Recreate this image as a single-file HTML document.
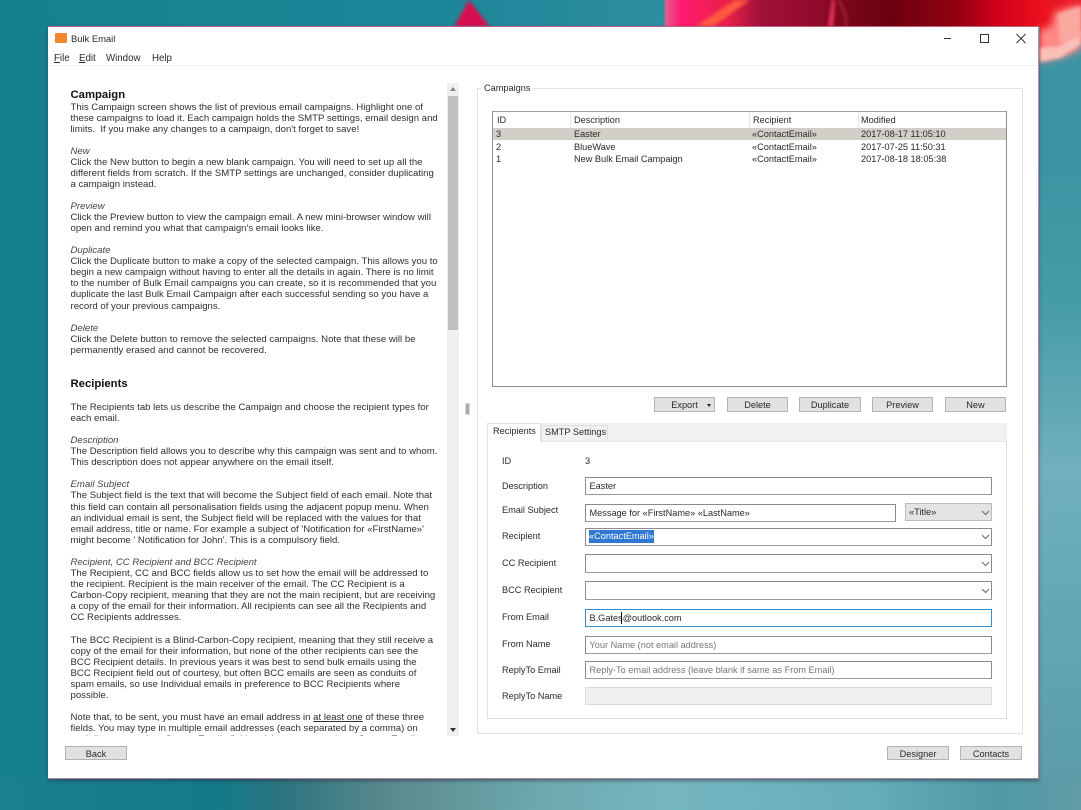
<!DOCTYPE html>
<html lang="en"><head><meta charset="utf-8"><title>Bulk Email</title>
<style>
html,body{margin:0;padding:0;width:1081px;height:810px;overflow:hidden;background:#1a8296}
#bg{position:absolute;left:0;top:0}
#win{position:absolute;left:48px;top:26px;width:990px;height:751px;background:#fff;border-top:1px solid #c06080;border-right:1px solid #b88aa0;border-bottom:1px solid #a88aa0;box-shadow:0 2px 3px rgba(50,40,60,.5);overflow:hidden}
.a{position:absolute;white-space:nowrap}
#p{position:absolute;left:0;top:0;width:1081px;height:810px;overflow:hidden}
.u{position:absolute;white-space:nowrap;font:9.2px/12px "Liberation Sans",sans-serif;color:#2a2a2a;margin-top:2px}
.m{font-size:9.7px;margin-top:0}
#help{position:absolute;left:60px;top:83px;width:387px;height:653px;overflow:hidden}
#help div{position:absolute;left:10.5px;margin-top:1px;white-space:nowrap;font:9.6px/12px "Liberation Sans",sans-serif;color:#303030}
#help i{color:#444}
#help .h{font-weight:bold;font-size:11.3px;color:#111}
.b{position:absolute;box-sizing:border-box;background:#e1e1e1;border:1px solid #b4b4b4;text-align:center;font:9.2px/14px "Liberation Sans",sans-serif;color:#2a2a2a}
.i{position:absolute;box-sizing:border-box;left:585px;width:407px;background:#fff;border:1px solid #8b8b8b;border-bottom-color:#999;font:9.2px/16px "Liberation Sans",sans-serif;color:#2a2a2a;padding-left:3.500px;white-space:nowrap}
.ph{color:#777}
.c{position:absolute;width:9px;height:6px}
</style></head><body>
<svg id="bg" width="1081" height="810" viewBox="0 0 1081 810">
<defs>
<filter id="f1" x="-50%" y="-50%" width="200%" height="200%"><feGaussianBlur stdDeviation="1.500"/></filter>
<filter id="f3" x="-50%" y="-50%" width="200%" height="200%"><feGaussianBlur stdDeviation="4"/></filter>
<linearGradient id="t" x1="0" x2="1" y1="0" y2="0"><stop offset="0" stop-color="#16808f"/><stop offset=".42" stop-color="#1d8699"/><stop offset=".6" stop-color="#2d8da0"/><stop offset="1" stop-color="#3c94a2"/></linearGradient>
<linearGradient id="bot" x1="0" x2="1081" y1="0" y2="0" gradientUnits="userSpaceOnUse"><stop offset="0" stop-color="#1a8090"/><stop offset=".2" stop-color="#137a8a"/><stop offset=".26" stop-color="#2c747e"/><stop offset=".36" stop-color="#5a8a8e"/><stop offset=".5" stop-color="#6da9ae"/><stop offset=".62" stop-color="#75b6c0"/><stop offset=".8" stop-color="#66aeba"/><stop offset=".92" stop-color="#4f9aa6"/><stop offset="1" stop-color="#5f9ca6"/></linearGradient>
<linearGradient id="rgt" x1="0" x2="0" y1="0" y2="810" gradientUnits="userSpaceOnUse"><stop offset="0" stop-color="#3c94a2"/><stop offset=".2" stop-color="#3c94a2"/><stop offset=".38" stop-color="#469ca8"/><stop offset=".58" stop-color="#70b0bc"/><stop offset=".75" stop-color="#62a8b4"/><stop offset="1" stop-color="#5a9aa6"/></linearGradient>
<linearGradient id="red" x1="660" x2="1081" y1="0" y2="0" gradientUnits="userSpaceOnUse"><stop offset="0" stop-color="#2d8da0" stop-opacity="0"/><stop offset=".015" stop-color="#e85a90"/><stop offset=".05" stop-color="#ff1a70"/><stop offset=".16" stop-color="#e8204a"/><stop offset=".24" stop-color="#a0103a"/><stop offset=".38" stop-color="#900a2a"/><stop offset=".44" stop-color="#780818"/><stop offset=".55" stop-color="#6c0010"/><stop offset=".7" stop-color="#900010"/><stop offset=".8" stop-color="#d00018"/><stop offset=".9" stop-color="#ea101e"/><stop offset="1" stop-color="#e8202a"/></linearGradient>
</defs>
<rect width="1081" height="810" fill="url(#t)"/>
<rect x="1039" y="0" width="42" height="810" fill="url(#rgt)"/>
<rect x="0" y="778" width="1081" height="32" fill="url(#bot)"/>
<polygon points="454,27 469,0 490,27" fill="#d8104f" filter="url(#f1)"/>
<polygon points="664,0 1081,0 1081,42 1040,58 1040,27 664,27" fill="url(#red)"/>
<polygon points="695,27 735,0 750,0 712,27" fill="#ff5a40" filter="url(#f1)"/>
<polygon points="828,27 832,0 835,0 833,27" fill="#f03060" filter="url(#f1)"/>
<path d="M838 0Q848 14 846 27" fill="none" stroke="#c83040" stroke-width="1.500" filter="url(#f1)"/>
<polygon points="1039,30 1052,26 1054,12 1081,4 1081,50 1066,56 1039,62" fill="#ff8a88" filter="url(#f3)"/>
<polygon points="1040,48 1060,46 1081,30 1081,44 1060,58 1040,62" fill="#f9c0b8" filter="url(#f1)"/>
<polygon points="1058,14 1081,6 1081,36 1060,44" fill="#f9a9a0" filter="url(#f1)"/>
</svg>
<div id="win"></div>
<div id="p">
<div class="a" style="left:55px;top:33px;width:12px;height:10px;background:#f0862e;border-radius:1px"></div>
<div class="u" style="left:71px;top:30.500px;font-size:9.400px">Bulk Email</div>
<div class="u m" style="left:54px;top:53px"><u>F</u>ile</div>
<div class="u m" style="left:79px;top:53px"><u>E</u>dit</div>
<div class="u m" style="left:106px;top:53px">Window</div>
<div class="u m" style="left:152px;top:53px">Help</div>
<div class="a" style="left:48px;top:65px;width:990px;height:1px;background:#f0f0f0"></div>
<svg class="a" style="left:940px;top:30px" width="90" height="16" viewBox="0 0 90 16" fill="none" stroke="#333" stroke-width="1"><path d="M4 8.500H11"/><rect x="40.500" y="4.500" width="8" height="8"/><path d="M76.500 4L85.500 13M85.500 4L76.500 13"/></svg>

<div id="help">
<div class="h" style="top:5.500px;margin-top:0">Campaign</div>
<div style="top:18px">This Campaign screen shows the list of previous email campaigns. Highlight one of</div>
<div style="top:29px">these campaigns to load it. Each campaign holds the SMTP settings, email design and</div>
<div style="top:40px">limits.&nbsp; If you make any changes to a campaign, don't forget to save!</div>
<div style="top:62px"><i>New</i></div>
<div style="top:73px">Click the New button to begin a new blank campaign. You will need to set up all the</div>
<div style="top:84px">different fields from scratch. If the SMTP settings are unchanged, consider duplicating</div>
<div style="top:95px">a campaign instead.</div>
<div style="top:117px"><i>Preview</i></div>
<div style="top:128px">Click the Preview button to view the campaign email. A new mini-browser window will</div>
<div style="top:139px">open and remind you what that campaign's email looks like.</div>
<div style="top:161px"><i>Duplicate</i></div>
<div style="top:172px">Click the Duplicate button to make a copy of the selected campaign. This allows you to</div>
<div style="top:183px">begin a new campaign without having to enter all the details in again. There is no limit</div>
<div style="top:194px">to the number of Bulk Email campaigns you can create, so it is recommended that you</div>
<div style="top:205px">duplicate the last Bulk Email Campaign after each successful sending so you have a</div>
<div style="top:217px">record of your previous campaigns.</div>
<div style="top:239px"><i>Delete</i></div>
<div style="top:250px">Click the Delete button to remove the selected campaigns. Note that these will be</div>
<div style="top:261px">permanently erased and cannot be recovered.</div>
<div class="h" style="top:295px;margin-top:0">Recipients</div>
<div style="top:318px">The Recipients tab lets us describe the Campaign and choose the recipient types for</div>
<div style="top:329px">each email.</div>
<div style="top:351px"><i>Description</i></div>
<div style="top:362px">The Description field allows you to describe why this campaign was sent and to whom.</div>
<div style="top:373px">This description does not appear anywhere on the email itself.</div>
<div style="top:395px"><i>Email Subject</i></div>
<div style="top:406px">The Subject field is the text that will become the Subject field of each email. Note that</div>
<div style="top:418px">this field can contain all personalisation fields using the adjacent popup menu. When</div>
<div style="top:429px">an individual email is sent, the Subject field will be replaced with the values for that</div>
<div style="top:440px">email address, title or name. For example a subject of 'Notification for «FirstName»'</div>
<div style="top:451px">might become ' Notification for John'. This is a compulsory field.</div>
<div style="top:473px"><i>Recipient, CC Recipient and BCC Recipient</i></div>
<div style="top:484px">The Recipient, CC and BCC fields allow us to set how the email will be addressed to</div>
<div style="top:495px">the recipient. Recipient is the main receiver of the email. The CC Recipient is a</div>
<div style="top:506px">Carbon-Copy recipient, meaning that they are not the main recipient, but are receiving</div>
<div style="top:517px">a copy of the email for their information. All recipients can see all the Recipients and</div>
<div style="top:528px">CC Recipients addresses.</div>
<div style="top:551px">The BCC Recipient is a Blind-Carbon-Copy recipient, meaning that they still receive a</div>
<div style="top:562px">copy of the email for their information, but none of the other recipients can see the</div>
<div style="top:573px">BCC Recipient details. In previous years it was best to send bulk emails using the</div>
<div style="top:584px">BCC Recipient field out of courtesy, but often BCC emails are seen as conduits of</div>
<div style="top:595px">spam emails, so use Individual emails in preference to BCC Recipients where</div>
<div style="top:606px">possible.</div>
<div style="top:628px">Note that, to be sent, you must have an email address in <u>at least one</u> of these three</div>
<div style="top:639px">fields. You may type in multiple email addresses (each separated by a comma) on</div>
<div style="top:650px">each line, or use the «ContactEmail» field and the popup to select «ContactEmail»</div>
</div>
<div class="a" style="left:447px;top:83px;width:12px;height:653px;background:#f0f0f0"></div>
<div class="a" style="left:448px;top:96px;width:10px;height:234px;background:#c0c0c0"></div>
<div class="a" style="left:450px;top:87px;border:3px solid transparent;border-top:0;border-bottom:4px solid #888"></div>
<div class="a" style="left:450px;top:728px;border:3px solid transparent;border-bottom:0;border-top:4px solid #333"></div>
<div class="a" style="left:465px;top:403px;width:5px;height:12px;background:#a8a8a8;border:1px solid #ddd;box-sizing:border-box"></div>
<div class="b" style="left:65px;top:746px;width:62px;height:14px">Back</div>

<div class="a" style="left:477px;top:88px;width:546px;height:646px;box-sizing:border-box;border:1px solid #e2e2e2"></div>
<div class="u" style="left:481px;top:80px;background:#fff;padding:0 3px">Campaigns</div>
<div class="a" style="left:492px;top:111px;width:515px;height:276px;box-sizing:border-box;border:1px solid #8f8f8f;border-top-color:#a0a0a0;background:#fff"></div>
<div class="a" style="left:493px;top:128px;width:513px;height:12px;background:#d2cfc8"></div>
<div class="a" style="left:570px;top:112px;width:1px;height:16px;background:#e8e8e8"></div>
<div class="a" style="left:749px;top:112px;width:1px;height:16px;background:#e8e8e8"></div>
<div class="a" style="left:858px;top:112px;width:1px;height:16px;background:#e8e8e8"></div>
<div class="u" style="left:497px;top:112px">ID</div>
<div class="u" style="left:574px;top:112px">Description</div>
<div class="u" style="left:753px;top:112px">Recipient</div>
<div class="u" style="left:861px;top:112px">Modified</div>
<div class="u" style="left:496px;top:126px">3</div><div class="u" style="left:574px;top:126px">Easter</div><div class="u" style="left:752px;top:126px">«ContactEmail»</div><div class="u" style="left:861px;top:126px">2017-08-17 11:05:10</div>
<div class="u" style="left:496px;top:139px">2</div><div class="u" style="left:574px;top:139px">BlueWave</div><div class="u" style="left:752px;top:139px">«ContactEmail»</div><div class="u" style="left:861px;top:139px">2017-07-25 11:50:31</div>
<div class="u" style="left:496px;top:151px">1</div><div class="u" style="left:574px;top:151px">New Bulk Email Campaign</div><div class="u" style="left:752px;top:151px">«ContactEmail»</div><div class="u" style="left:861px;top:151px">2017-08-18 18:05:38</div>

<div class="b" style="left:654px;top:397px;width:61px;height:15px;padding-right:0">Export</div>
<div class="a" style="left:707px;top:404px;border:2.500px solid transparent;border-bottom:0;border-top:3px solid #222"></div>
<div class="b" style="left:727px;top:397px;width:61px;height:15px">Delete</div>
<div class="b" style="left:799px;top:397px;width:62px;height:15px">Duplicate</div>
<div class="b" style="left:872px;top:397px;width:61px;height:15px">Preview</div>
<div class="b" style="left:945px;top:397px;width:61px;height:15px">New</div>

<div class="a" style="left:487px;top:423px;width:520px;height:18px;background:#f1f1f1"></div>
<div class="a" style="left:487px;top:441px;width:520px;height:278px;box-sizing:border-box;border:1px solid #e0e0e0;border-top:1px solid #e8e8e8;background:#fff"></div>
<div class="a" style="left:541px;top:425px;width:67px;height:16px;box-sizing:border-box;background:#f1f1f1;border:1px solid #dedede;border-bottom:0"></div>
<div class="a" style="left:487px;top:423px;width:54px;height:19px;box-sizing:border-box;background:#fff;border:1px solid #e0e0e0;border-bottom:0"></div>
<div class="u" style="left:493px;top:423px">Recipients</div>
<div class="u" style="left:545px;top:424px">SMTP Settings</div>

<div class="u" style="left:502px;top:453px">ID</div><div class="u" style="left:585px;top:453px">3</div>
<div class="u" style="left:502px;top:478px">Description</div>
<div class="u" style="left:502px;top:502px">Email Subject</div>
<div class="u" style="left:502px;top:528px">Recipient</div>
<div class="u" style="left:502px;top:555px">CC Recipient</div>
<div class="u" style="left:502px;top:582px">BCC Recipient</div>
<div class="u" style="left:502px;top:609px">From Email</div>
<div class="u" style="left:502px;top:636px">From Name</div>
<div class="u" style="left:502px;top:662px">ReplyTo Email</div>
<div class="u" style="left:502px;top:688px">ReplyTo Name</div>

<div class="i" style="top:477px;height:18px">Easter</div>
<div class="i" style="top:504px;height:18px;width:311px">Message for «FirstName» «LastName»</div>
<div class="i" style="left:905px;width:87px;top:503px;height:18px;background:#e3e3e3;border-color:#bbb;padding-left:3px">«Title»</div>
<div class="i" style="top:528px;height:18px;padding-left:3px;line-height:15px"><span style="background:#2f78d2;color:#fff;display:inline-block;height:13px;line-height:13px;vertical-align:top;margin-top:1px">«ContactEmail»</span></div>
<div class="i" style="top:554px;height:19px"></div>
<div class="i" style="top:581px;height:19px"></div>
<div class="i" style="top:609px;height:18px;border-color:#2f8ccf">B.Gates@outlook.com</div>
<div class="a" style="left:621px;top:612px;width:1px;height:12px;background:#111"></div>
<div class="i ph" style="top:636px;height:18px">Your Name (not email address)</div>
<div class="i ph" style="top:661px;height:18px">Reply-To email address (leave blank if same as From Email)</div>
<div class="i" style="top:687px;height:18px;background:#efefef;border-color:#dcdcdc"></div>
<svg class="c" style="left:981px;top:510px" viewBox="0 0 9 6" fill="none" stroke="#666"><path d="M1 1L4.500 4.500L8 1"/></svg>
<svg class="c" style="left:981px;top:534px" viewBox="0 0 9 6" fill="none" stroke="#666"><path d="M1 1L4.500 4.500L8 1"/></svg>
<svg class="c" style="left:981px;top:561px" viewBox="0 0 9 6" fill="none" stroke="#666"><path d="M1 1L4.500 4.500L8 1"/></svg>
<svg class="c" style="left:981px;top:588px" viewBox="0 0 9 6" fill="none" stroke="#666"><path d="M1 1L4.500 4.500L8 1"/></svg>

<div class="b" style="left:887px;top:746px;width:62px;height:14px">Designer</div>
<div class="b" style="left:960px;top:746px;width:62px;height:14px">Contacts</div>
</div>
</body></html>
